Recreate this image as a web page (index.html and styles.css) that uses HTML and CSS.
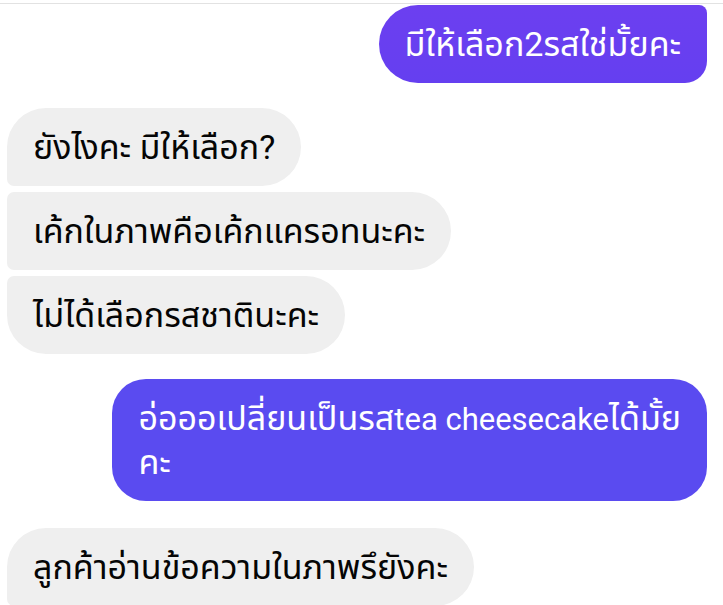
FILE: index.html
```html
<!DOCTYPE html>
<html lang="th">
<head>
<meta charset="utf-8">
<link rel="stylesheet" href="styles.css">
</head>
<body>
<div class="divider"></div>
<div class="thread">
  <div class="msg sent sent-top">มีให้เลือก2รสใช่มั้ยคะ</div>
  <div class="group">
    <div class="msg recv recv-first">ยังไงคะ มีให้เลือก?</div>
    <div class="msg recv recv-mid">เค้กในภาพคือเค้กแครอทนะคะ</div>
    <div class="msg recv recv-last">ไม่ได้เลือกรสชาตินะคะ</div>
  </div>
  <div class="msg sent sent-two">อ่อออเปลี่ยนเป็นรส<span class="latin">tea cheesecake</span>ได้มั้ย<br>คะ</div>
  <div class="msg recv recv-first recv-bottom">ลูกค้าอ่านข้อความในภาพรึยังคะ</div>
</div>
</body>
</html>
```
FILE: styles.css
```css
html, body {
  margin: 0;
  padding: 0;
  background: #ffffff;
  width: 723px;
  height: 605px;
  overflow: hidden;
}
body {
  font-family: "Roboto", "Noto Sans Thai", "Noto Sans", "DejaVu Sans", sans-serif;
  font-size: 34px;
  color: #050505;
}
.divider {
  height: 3px;
  border-bottom: 1px solid #e2e2e2;
}
.thread {
  display: flex;
  flex-direction: column;
  padding: 1px 16px 0 7px;
}
.group {
  display: flex;
  flex-direction: column;
  gap: 6px;
  margin-top: 25px;
}
.msg {
  padding: 18px 26px;
  line-height: 42px;
  white-space: nowrap;
  align-self: flex-start;
}
.latin {
  font-size: 31px;
}
.sent {
  align-self: flex-end;
  color: #ffffff;
}
.sent-top {
  background: linear-gradient(180deg, #6c3ff0 0%, #653ff0 100%);
  border-radius: 39px 8px 22px 39px;
}
.sent-two {
  margin-top: 25px;
  background: #5a4bf0;
  border-radius: 34px;
}
.recv {
  background: #efefef;
}
.recv-first {
  border-radius: 39px 39px 39px 7px;
}
.recv-mid {
  border-radius: 7px 39px 39px 7px;
}
.recv-last {
  border-radius: 7px 39px 39px 39px;
}
.recv-bottom {
  margin-top: 27px;
}
```
